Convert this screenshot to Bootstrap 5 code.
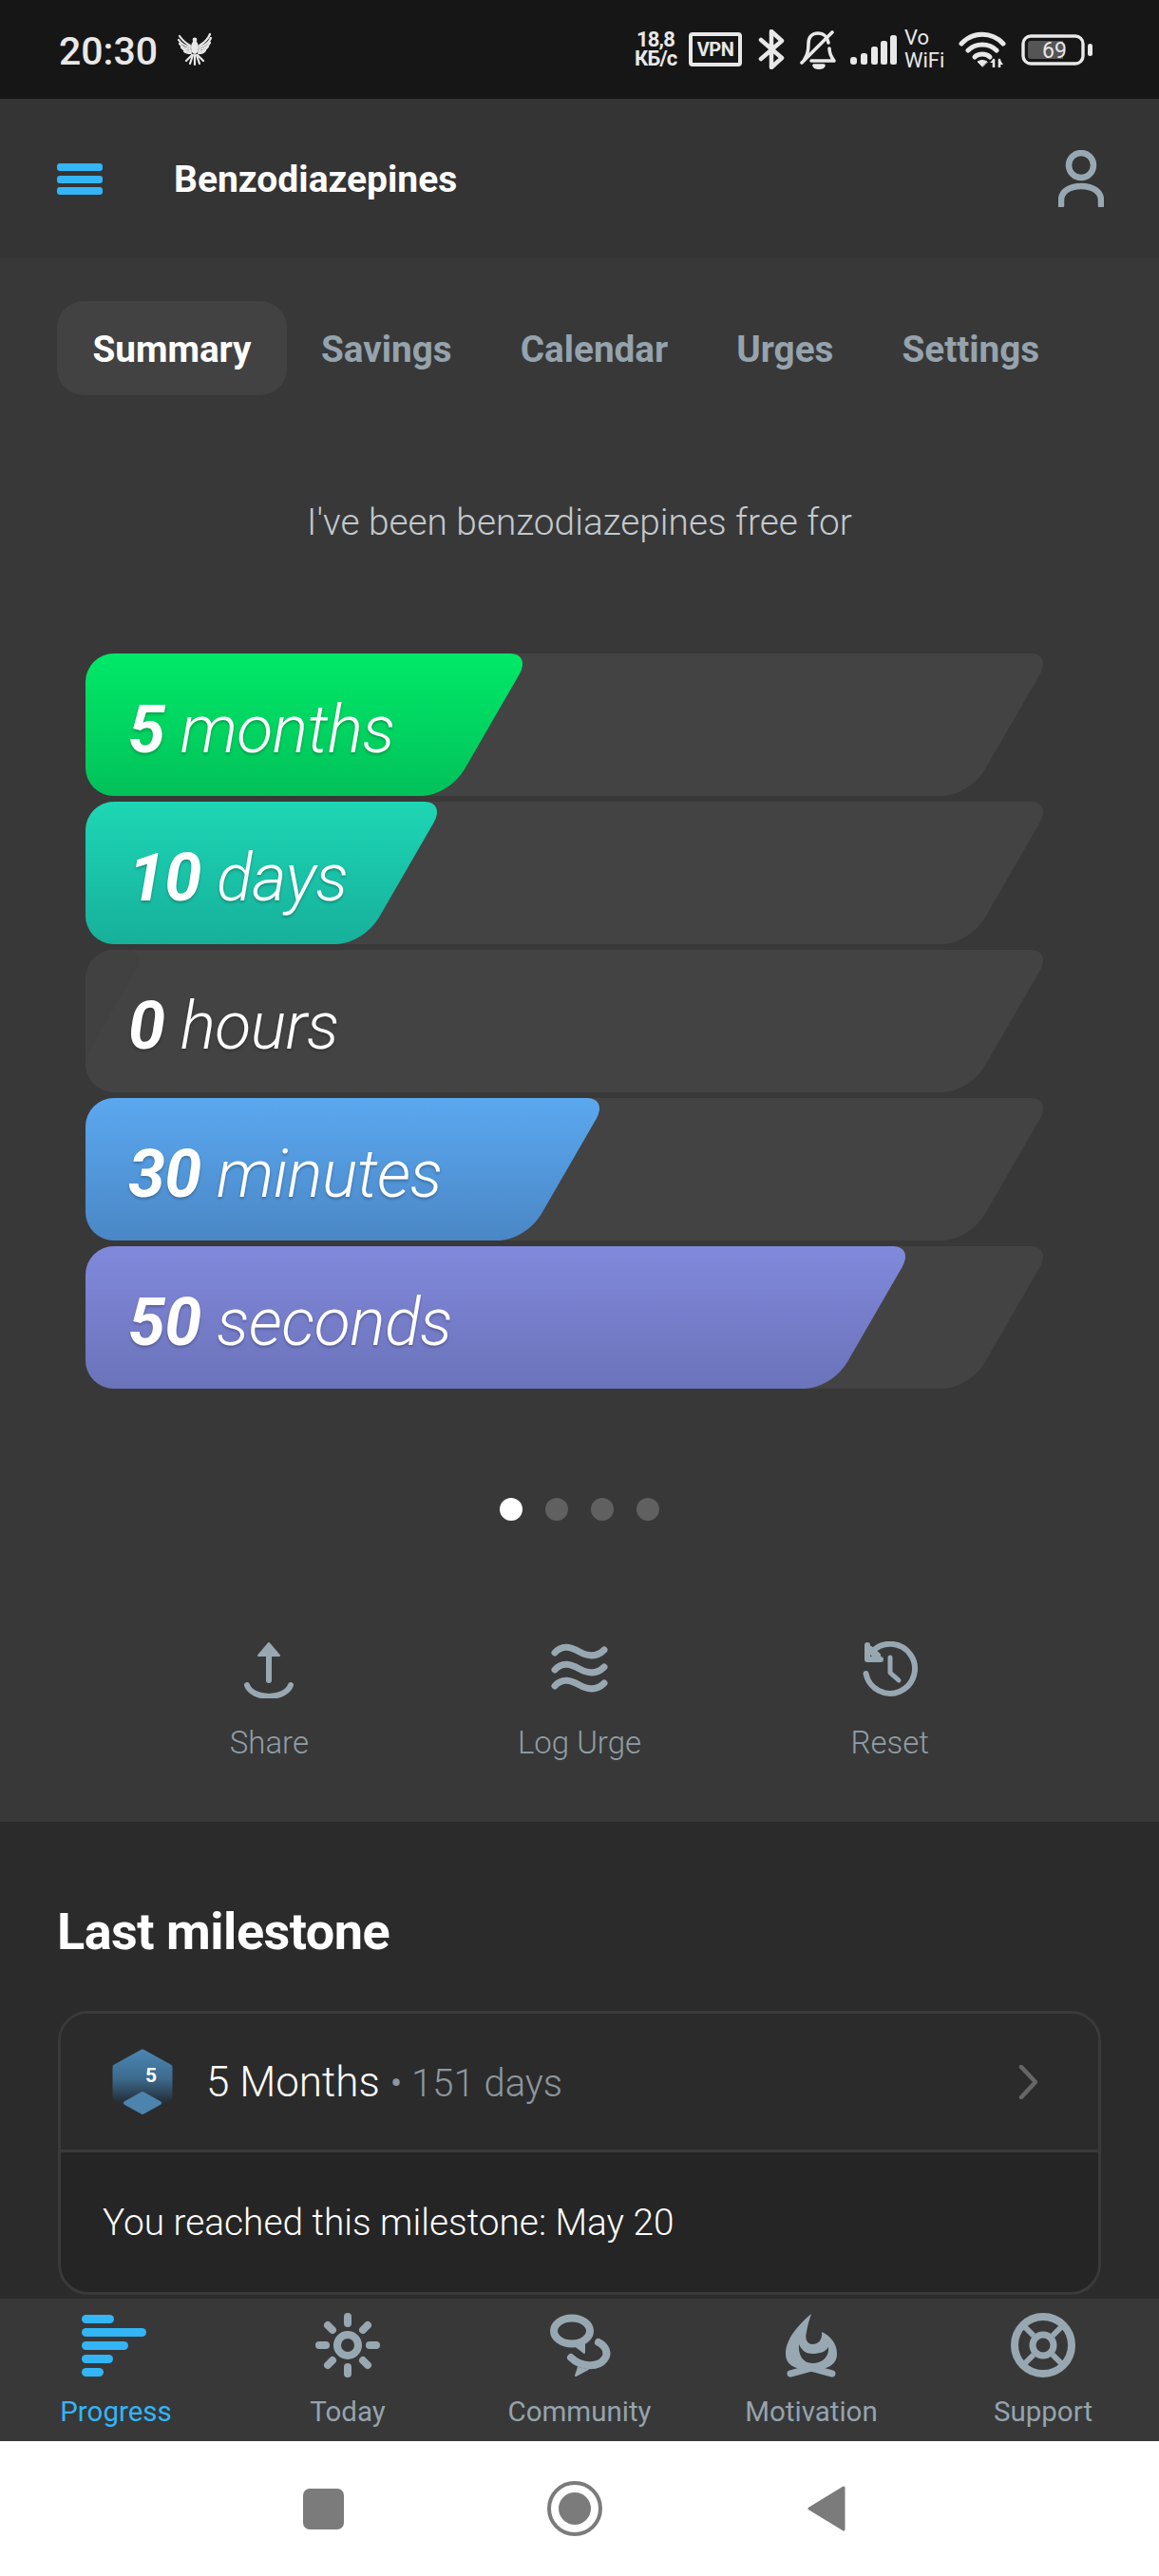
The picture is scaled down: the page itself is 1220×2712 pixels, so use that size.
<!DOCTYPE html>
<html lang="en">
<head>
  <meta charset="UTF-8" />
  <title>Benzodiazepines</title>
  <link rel="stylesheet" href="https://cdn.jsdelivr.net/npm/bootstrap@5.3.3/dist/css/bootstrap.min.css" />
  <style>
    html, body { margin: 0; background: #fff; }
    body { width: 1220px; height: 2712px; overflow: hidden; font-family: Roboto, "Liberation Sans", sans-serif; }
    svg { display: block; flex: none; }

    /* status bar */
    .status-bar { height: 104px; background: #161616; color: #e8e8e8; padding: 0 70px 0 62px; }
    .status-time { font-size: 41px; font-weight: 500; line-height: 1; width: 124px; padding-top: 5px; }
    .net-speed { width: 44px; font-size: 22px; font-weight: 700; line-height: 20px; text-align: center; letter-spacing: -0.8px; white-space: nowrap; }
    .vpn-box { width: 56px; height: 36px; margin-left: 13px; border: 4px solid #e8e8e8; border-radius: 4px; font-size: 20px; font-weight: 700; line-height: 28px; text-align: center; letter-spacing: -0.5px; }
    .sb-bt { margin-left: 17px; }
    .sb-bell { margin-left: 16px; }
    .sb-signal { margin-left: 12px; }
    .vo-wifi { width: 46px; margin-left: 8px; font-size: 22px; line-height: 24px; white-space: nowrap; }
    .sb-wifi { margin-left: 11px; }
    .batt { width: 75px; height: 33px; margin-left: 16px; }

    /* app header */
    .app-head { height: 168px; background: #343434; padding: 0 58px 0 60px; }
    .app-title { font-size: 39px; font-weight: 700; color: #fff; margin-left: 75px; padding-top: 2px; }

    /* hero */
    .hero { height: 1646px; background: #383838; padding-top: 45px; }
    .tab-row { padding-left: 60px; gap: 0; }
    .tab-row .nav-link { height: 99px; padding: 0 36px; font-size: 38.7px; font-weight: 700; line-height: 101px; color: #95a3ad; border-radius: 28px; }
    .tab-row .nav-link.active { width: 242px; padding: 0; text-align: center; background: #424242; color: #fff; }
    .intro-line { margin: 110px 0 0; height: 46px; font-size: 38.8px; font-weight: 300; line-height: 48px; text-align: center; color: #c3c9cd; }

    .bars { margin: 116px 0 0 90px; width: 1020px; display: flex; flex-direction: column; gap: 6px; }
    .bar-row { position: relative; height: 150px; overflow: hidden; border-radius: 30px 0 0 30px; }
    .skew-shape { position: absolute; top: 0; left: -60px; height: 150px; transform: skewX(-30deg); border-radius: 0 22px 28px 0; }
    .skew-track { background: #434343; }
    .bar-text { position: relative; padding-left: 45px; font-size: 70px; line-height: 160px; font-style: italic; font-weight: 300; color: #fff; text-shadow: 0 2px 3px rgba(0,0,0,.25); white-space: nowrap; letter-spacing: -0.6px; }
    .bar-text b { font-weight: 700; }
    .fill-months { background: linear-gradient(#00e968, #02c15a); }
    .fill-days { background: linear-gradient(#1dd6b4, #17b09b); }
    .fill-hours { background: #414141; }
    .fill-minutes { background: linear-gradient(#5ba8f0, #4a87c6); }
    .fill-seconds { background: linear-gradient(#8189dc, #6b73ba); }

    .pager { margin-top: 115px; gap: 24px; }
    .pager span { width: 24px; height: 24px; border-radius: 50%; background: #606060; }
    .pager span.on { background: #fff; }

    .actions { margin-top: 127px; padding: 0 120px; }
    .action-item { text-align: center; }
    .action-item svg { margin: 0 auto; }
    .action-item div { margin-top: 27px; font-size: 33px; font-weight: 300; line-height: 40px; color: #909ea7; }

    /* milestone */
    .milestone { height: 502px; background: #2b2b2b; padding: 0 61px; }
    .milestone h2 { margin: 0 0 0 -1px; padding-top: 90px; height: 199px; font-size: 54px; font-weight: 700; line-height: 52px; color: #fff; letter-spacing: -0.5px; }
    .mile-card { height: 299px; background: #252525; border: 3px solid #3a3a3a; border-radius: 32px; overflow: hidden; }
    .mile-top { height: 148px; background: #2b2b2b; border-bottom: 3px solid #3a3a3a; padding: 0 64px 0 54px; }
    .mile-name { margin-left: 35px; font-size: 44px; font-weight: 300; color: #fff; }
    .mile-days { font-size: 40px; font-weight: 300; color: #8d979e; }
    .mile-note { padding: 0 44px; font-size: 38.8px; font-weight: 300; line-height: 147px; color: #fff; }

    /* bottom tabs */
    .tabbar { height: 150px; background: #383838; padding-top: 15px; }
    .tabbar-item { text-align: center; font-size: 29.5px; line-height: 34px; color: #95a3ad; }
    .tabbar-item svg { margin: 0 auto 19px; }
    .tabbar-item.active { color: #33b5f6; }
    .tabbar-item.active svg { margin-left: 86px; }

    /* android nav */
    .sys-nav { height: 142px; background: #fff; }
    .sys-square { width: 43px; height: 43px; margin-left: 319px; background: #7b7b7b; border-radius: 7px; }
    .sys-home { margin-left: 214px; }
    .sys-back { margin-left: 216px; }
  </style>
</head>
<body>
  <!-- status bar -->
  <div class="status-bar d-flex align-items-center justify-content-between">
    <div class="d-flex align-items-center">
      <div class="status-time">20:30</div>
      <svg width="38" height="36" viewBox="0 0 38 36" fill="none" stroke="#e8e8e8" stroke-linecap="round">
        <ellipse cx="19" cy="16" rx="4" ry="7" fill="#e8e8e8" stroke="none"/>
        <circle cx="19" cy="8" r="2.4" fill="#e8e8e8" stroke="none"/>
        <g stroke-width="2.2">
          <path d="M14 14 C9 11 5 7 3 4"/><path d="M14 16 C8 14 4 11 2 8"/><path d="M14 18 C9 17 5 15 3 12"/><path d="M15 20 C11 20 7 18 5 16"/><path d="M15 22 C12 22 9 21 8 20"/>
          <path d="M24 14 C29 11 33 7 35 2"/><path d="M24 16 C30 14 34 11 36 6"/><path d="M24 18 C29 17 33 15 35 11"/><path d="M23 20 C27 20 31 18 33 15"/><path d="M23 22 C26 22 29 21 30 19"/>
          <path d="M19 24 V34"/><path d="M17 24 L14 33"/><path d="M21 24 L24 33"/><path d="M16 24 L10 30"/><path d="M22 24 L28 30"/>
        </g>
      </svg>
    </div>
    <div class="d-flex align-items-center">
      <div class="net-speed">18,8<br>КБ/с</div>
      <div class="vpn-box">VPN</div>
      <svg class="sb-bt" width="28" height="42" viewBox="0 0 28 42" fill="none" stroke="#e8e8e8" stroke-width="4.5" stroke-linejoin="round" stroke-linecap="round"><path d="M3 11 L25 30 L14 40 V2 L25 12 L3 31"/></svg>
      <svg class="sb-bell" width="40" height="42" viewBox="0 0 40 42" fill="none" stroke="#e8e8e8" stroke-width="3.6" stroke-linecap="round" stroke-linejoin="round">
        <path d="M30 14 C29 8 25 4 19 4 C12 4 9 9 9 15 C9 22 8 27 5 31"/>
        <path d="M31 20 C31 26 33 29 36 33 H12"/>
        <path d="M2 35 L34 3"/>
        <path d="M15 38 H25 C24 41 16 41 15 38Z" fill="#e8e8e8"/>
      </svg>
      <svg class="sb-signal" width="50" height="32" viewBox="0 0 50 32" fill="#e8e8e8">
        <rect x="1" y="24" width="7" height="8" rx="3"/><rect x="12" y="20" width="7" height="12" rx="2.5"/><rect x="23" y="13" width="7" height="19" rx="2.5"/><rect x="33" y="7" width="7" height="25" rx="2.5"/><rect x="43" y="1" width="7" height="31" rx="2.5"/>
      </svg>
      <div class="vo-wifi">Vo<br>WiFi</div>
      <svg class="sb-wifi" width="50" height="38" viewBox="0 0 50 38" fill="none" stroke="#e8e8e8" stroke-width="5" stroke-linecap="round">
        <path d="M3 13 C15 0 35 0 47 13"/>
        <path d="M10 20 C18 12 32 12 40 20"/>
        <path d="M17 27 C21 23 29 23 33 27"/>
        <path d="M25 37 L20 32 C23 30 27 30 30 32Z" fill="#e8e8e8" stroke-width="1"/>
        <path d="M37 38 V30 M43 30 V38" stroke-width="2.6"/>
        <path d="M33 33 L37 29 L37 33Z M43 29 L47 35 H43Z" fill="#e8e8e8" stroke="none"/>
      </svg>
      <svg class="batt" viewBox="0 0 75 33">
        <rect x="2" y="2" width="63" height="29" rx="8" fill="none" stroke="#e8e8e8" stroke-width="3.4"/>
        <path d="M10 7 H44 V26 H10 Q7 26 7 23 V10 Q7 7 10 7Z" fill="#555"/>
        <rect x="70" y="10" width="5" height="13" rx="2.5" fill="#e8e8e8"/>
        <text x="35" y="25" text-anchor="middle" font-family="Roboto, sans-serif" font-size="23" fill="#e8e8e8">69</text>
      </svg>
    </div>
  </div>

  <!-- header -->
  <div class="app-head d-flex align-items-center justify-content-between">
    <div class="d-flex align-items-center">
      <svg width="48" height="33" viewBox="0 0 48 33" fill="#33b5f6"><rect width="48" height="8" rx="3"/><rect y="13" width="48" height="8" rx="3"/><rect y="25" width="48" height="8" rx="3"/></svg>
      <div class="app-title">Benzodiazepines</div>
    </div>
    <svg width="48" height="60" viewBox="0 0 48 60" fill="none" stroke="#98a8b2" stroke-width="6.5">
      <circle cx="24" cy="16" r="13"/>
      <path d="M3 58 V53 C3 44 11 38 24 38 C37 38 45 44 45 53 V58" stroke-linecap="round"/>
    </svg>
  </div>

  <!-- progress summary -->
  <div class="hero">
    <ul class="nav tab-row">
      <li class="nav-item"><a class="nav-link active" href="#">Summary</a></li>
      <li class="nav-item"><a class="nav-link" href="#">Savings</a></li>
      <li class="nav-item"><a class="nav-link" href="#">Calendar</a></li>
      <li class="nav-item"><a class="nav-link" href="#">Urges</a></li>
      <li class="nav-item"><a class="nav-link" href="#">Settings</a></li>
    </ul>

    <p class="intro-line">I've been benzodiazepines free for</p>

    <div class="bars">
      <div class="bar-row">
        <div class="skew-shape skew-track" style="width: 1034px"></div>
        <div class="skew-shape fill-months" style="width: 486px"></div>
        <div class="bar-text"><b>5</b> months</div>
      </div>
      <div class="bar-row">
        <div class="skew-shape skew-track" style="width: 1034px"></div>
        <div class="skew-shape fill-days" style="width: 396px"></div>
        <div class="bar-text"><b>10</b> days</div>
      </div>
      <div class="bar-row">
        <div class="skew-shape skew-track" style="width: 1034px"></div>
        <div class="skew-shape fill-hours" style="width: 82px"></div>
        <div class="bar-text"><b>0</b> hours</div>
      </div>
      <div class="bar-row">
        <div class="skew-shape skew-track" style="width: 1034px"></div>
        <div class="skew-shape fill-minutes" style="width: 567px"></div>
        <div class="bar-text"><b>30</b> minutes</div>
      </div>
      <div class="bar-row">
        <div class="skew-shape skew-track" style="width: 1034px"></div>
        <div class="skew-shape fill-seconds" style="width: 889px"></div>
        <div class="bar-text"><b>50</b> seconds</div>
      </div>
    </div>

    <div class="pager d-flex justify-content-center"><span class="on"></span><span></span><span></span><span></span></div>

    <div class="actions row g-0">
      <div class="action-item col-4">
        <svg width="60" height="60" viewBox="0 0 60 60" fill="none" stroke="#98a8b2" stroke-width="6" stroke-linecap="round">
          <path d="M30 2 L41 15 H19Z" fill="#98a8b2" stroke-width="2" stroke-linejoin="round"/>
          <path d="M30 12 V41"/>
          <path d="M7 46 C13 62 47 62 53 46"/>
        </svg>
        <div>Share</div>
      </div>
      <div class="action-item col-4">
        <svg width="60" height="60" viewBox="0 0 60 60" fill="none" stroke="#98a8b2" stroke-width="7" stroke-linecap="round">
          <path d="M4 12 C12 3 21 6 30 11 C39 16 48 17 56 9"/>
          <path d="M4 30 C12 21 21 24 30 29 C39 34 48 35 56 27"/>
          <path d="M4 47 C12 38 21 41 30 46 C39 51 48 52 56 44"/>
        </svg>
        <div>Log Urge</div>
      </div>
      <div class="action-item col-4">
        <svg width="60" height="60" viewBox="0 0 60 60" fill="none" stroke="#98a8b2" stroke-width="6" stroke-linecap="round" stroke-linejoin="round">
          <path d="M4.5 34 A26 26 0 1 0 11 11"/>
          <path d="M6 4 V19 H20"/>
          <path d="M9 9 L16 15" stroke-width="8"/>
          <path d="M30 17 V33 L39 41" stroke-width="5"/>
        </svg>
        <div>Reset</div>
      </div>
    </div>
  </div>

  <!-- last milestone -->
  <div class="milestone">
    <h2>Last milestone</h2>
    <div class="card mile-card">
      <div class="mile-top d-flex align-items-center">
        <svg width="64" height="70" viewBox="13 12 64 70">
          <defs><linearGradient id="hexfill" x1="0" y1="0" x2="0" y2="1"><stop offset="0" stop-color="#4a85b0"/><stop offset=".45" stop-color="#3c6a8c"/><stop offset=".8" stop-color="#26323d"/></linearGradient></defs>
          <path d="M45 15 L74 31 V63 L45 79 L16 63 V31Z" fill="url(#hexfill)" stroke="url(#hexfill)" stroke-width="5" stroke-linejoin="round"/>
          <path d="M45 59 L63 69 L45 79 L27 69Z" fill="#4c84ad" stroke="#4c84ad" stroke-width="4" stroke-linejoin="round"/>
          <text x="54" y="47" text-anchor="middle" font-family="Roboto, sans-serif" font-size="21" font-weight="700" fill="#fff">5</text>
        </svg>
        <div class="mile-name">5 Months <span class="mile-days">• 151 days</span></div>
        <svg class="ms-auto" width="20" height="36" viewBox="0 0 20 36" fill="none" stroke="#666" stroke-width="4.5" stroke-linecap="round" stroke-linejoin="round"><path d="M3 2 L18 18 L3 34"/></svg>
      </div>
      <div class="mile-note">You reached this milestone: May 20</div>
    </div>
  </div>

  <!-- bottom tabs -->
  <div class="tabbar row row-cols-5 g-0">
    <div class="tabbar-item col active">
      <svg width="68" height="68" viewBox="0 0 68 68" fill="#33b5f6">
        <rect y="2" width="34" height="9" rx="4.5"/><rect y="16" width="68" height="9" rx="4.5"/><rect y="30" width="49" height="9" rx="4.5"/><rect y="44" width="33" height="9" rx="4.5"/><rect y="58" width="23" height="9" rx="4.5"/>
      </svg>
      Progress
    </div>
    <div class="tabbar-item col">
      <svg width="68" height="68" viewBox="-34 -34 68 68" fill="none" stroke="#98a8b2" stroke-linecap="round">
        <circle r="11" stroke-width="8"/>
        <g stroke-width="8">
          <path d="M0 -30 V-23"/><path d="M0 30 V23"/><path d="M-30 0 H-23"/><path d="M30 0 H23"/>
          <path d="M-21 -21 L-16 -16"/><path d="M21 -21 L16 -16"/><path d="M-21 21 L-16 16"/><path d="M21 21 L16 16"/>
        </g>
      </svg>
      Today
    </div>
    <div class="tabbar-item col">
      <svg width="90" height="68" viewBox="0 10 90 68" fill="none" stroke="#98a8b2" stroke-width="8" stroke-linecap="round" stroke-linejoin="round">
        <ellipse cx="37" cy="29" rx="19" ry="13.5"/>
        <path d="M41 45 L50 52 L50 42" fill="#98a8b2" stroke-width="2"/>
        <path d="M65 41 C73 45 76 53 71 59 C64 68 46 67 36 57"/>
        <path d="M44 67 L41 76 L54 69" fill="#98a8b2" stroke-width="2"/>
      </svg>
      Community
    </div>
    <div class="tabbar-item col">
      <svg width="54" height="68" viewBox="0 0 54 68" stroke-linecap="round">
        <path d="M27 1 C14 12 0 27 0 43 C0 53 7 60 27 60 C47 60 54 53 54 43 C54 32 47 24 38 20 C39 29 34 33 28 33 C22 33 20 26 22 20 C23 13 25 7 27 1Z" fill="#98a8b2"/>
        <path d="M14 33 C13 44 18 53 28 53 C39 53 46 46 45 36 C42 41 36 43 28 43 C22 43 17 40 14 33Z" fill="#383838"/>
        <path d="M5 64 L27 58 L49 64" fill="none" stroke="#98a8b2" stroke-width="7"/>
      </svg>
      Motivation
    </div>
    <div class="tabbar-item col">
      <svg width="68" height="68" viewBox="-34 -34 68 68" fill="none" stroke="#98a8b2">
        <circle r="30" stroke-width="8"/>
        <circle r="11" stroke-width="7"/>
        <path d="M-22 -22 L-10 -10 M22 -22 L10 -10 M-22 22 L-10 10 M22 22 L10 10" stroke-width="6"/>
      </svg>
      Support
    </div>
  </div>

  <!-- android nav -->
  <div class="sys-nav d-flex align-items-center">
    <div class="sys-square"></div>
    <svg class="sys-home" width="58" height="58" viewBox="0 0 58 58"><circle cx="29" cy="29" r="27" fill="none" stroke="#7b7b7b" stroke-width="4"/><circle cx="29" cy="29" r="17" fill="#7b7b7b"/></svg>
    <svg class="sys-back" width="40" height="48" viewBox="0 0 40 48"><path d="M38 2 V46 L2 24Z" fill="#7b7b7b" stroke="#7b7b7b" stroke-width="3" stroke-linejoin="round"/></svg>
  </div>
</body>
</html>
